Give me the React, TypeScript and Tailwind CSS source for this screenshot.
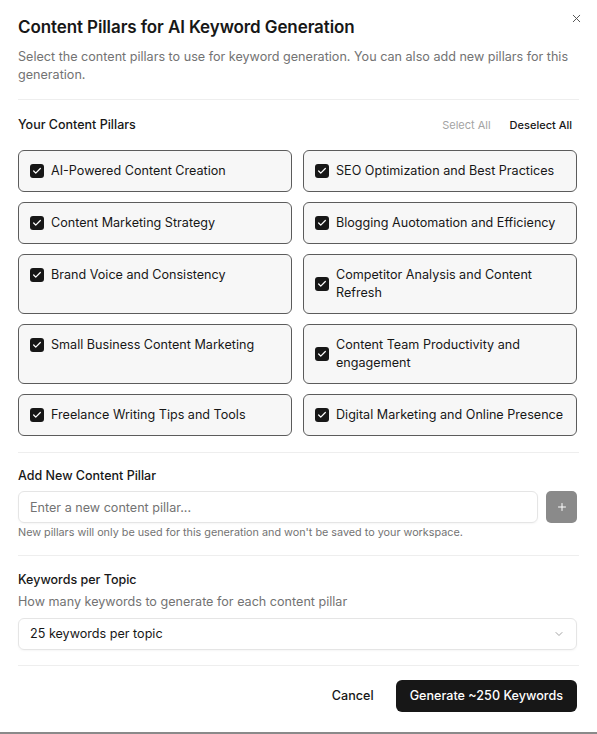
import React, { useState } from "react";

const PILLARS = [
  "AI-Powered Content Creation",
  "SEO Optimization and Best Practices",
  "Content Marketing Strategy",
  "Blogging Auotomation and Efficiency",
  "Brand Voice and Consistency",
  "Competitor Analysis and Content Refresh",
  "Small Business Content Marketing",
  "Content Team Productivity and engagement",
  "Freelance Writing Tips and Tools",
  "Digital Marketing and Online Presence",
];

function CheckBox({ checked }: { checked: boolean }) {
  return (
    <span
      className={
        "flex h-[14px] w-[14px] shrink-0 items-center justify-center rounded-[3px] " +
        (checked ? "bg-[#171717]" : "border border-[#a3a3a3] bg-white")
      }
    >
      {checked && (
        <svg width="10" height="10" viewBox="0 0 24 24" fill="none" stroke="white" strokeWidth="3" strokeLinecap="round" strokeLinejoin="round">
          <path d="M20 6 9 17l-5-5" />
        </svg>
      )}
    </span>
  );
}

export default function App() {
  const [selected, setSelected] = useState<boolean[]>(PILLARS.map(() => true));
  const [pillar, setPillar] = useState("");

  const toggle = (i: number) =>
    setSelected((s) => s.map((v, j) => (j === i ? !v : v)));

  return (
    <div className="min-h-[734px] bg-[#8a8a8a] font-['Inter',sans-serif] text-[#171717]">
      <div className="relative h-[732px] bg-white px-[18px] pt-[16px]">
        <button className="absolute right-[14px] top-[12px] text-[#525252]">
          <svg width="13" height="13" viewBox="0 0 24 24" fill="none" stroke="currentColor" strokeWidth="1.8" strokeLinecap="round">
            <path d="M18 6 6 18M6 6l12 12" />
          </svg>
        </button>

        <h1 className="text-[17px] font-semibold leading-[22px] tracking-[-0.1px]">
          Content Pillars for AI Keyword Generation
        </h1>
        <p className="mt-[10px] text-[12.6px] leading-[18px] text-[#737373]">
          Select the content pillars to use for keyword generation. You can also add new pillars for this generation.
        </p>

        <div className="mt-[15px] border-t border-[#eeeeee]" />

        <div className="mt-[16px] flex items-center justify-between pr-[7px]">
          <h2 className="text-[12.5px] font-medium leading-[18px]">Your Content Pillars</h2>
          <div className="flex items-center gap-[19px] text-[11px] leading-[16px]">
            <button className="text-[#a3a3a3]" onClick={() => setSelected(PILLARS.map(() => true))}>
              Select All
            </button>
            <button className="font-medium text-[#171717]" onClick={() => setSelected(PILLARS.map(() => false))}>
              Deselect All
            </button>
          </div>
        </div>

        <div className="mt-[16px] grid grid-cols-2 gap-x-[11px] gap-y-[10px] pr-[2px]">
          {PILLARS.map((p, i) => (
            <label
              key={p}
              onClick={() => toggle(i)}
              className="cursor-pointer rounded-[6px] border-[1.5px] border-[#5c5c5c] bg-[#f7f7f7] px-[11px] py-[11px]"
            >
              <div className="flex items-center gap-[7px]">
                <CheckBox checked={selected[i]} />
                <span className="text-[12.6px] leading-[18px]">{p}</span>
              </div>
            </label>
          ))}
        </div>

        <div className="mt-[16px] border-t border-[#eeeeee]" />

        <h3 className="mt-[14px] text-[12.5px] font-medium leading-[18px]">Add New Content Pillar</h3>
        <div className="mt-[6px] flex gap-[8px] pr-[2px]">
          <input
            value={pillar}
            onChange={(e) => setPillar(e.target.value)}
            placeholder="Enter a new content pillar..."
            className="h-[32px] flex-1 rounded-[6px] border border-[#e5e5e5] px-[11px] text-[12.6px] shadow-[0_1px_2px_rgba(0,0,0,0.04)] outline-none placeholder:text-[#737373]"
          />
          <button className="flex h-[32px] w-[31px] items-center justify-center rounded-[5px] bg-[#8a8a8a] text-white">
            <svg width="12" height="12" viewBox="0 0 24 24" fill="none" stroke="currentColor" strokeWidth="2" strokeLinecap="round">
              <path d="M12 5v14M5 12h14" />
            </svg>
          </button>
        </div>
        <p className="mt-[3px] text-[10.8px] leading-[14px] text-[#737373]">
          New pillars will only be used for this generation and won't be saved to your workspace.
        </p>

        <div className="mt-[15px] border-t border-[#eeeeee]" />

        <h3 className="mt-[15px] text-[12.5px] font-medium leading-[18px]">Keywords per Topic</h3>
        <p className="mt-[4px] text-[12.6px] leading-[18px] text-[#737373]">
          How many keywords to generate for each content pillar
        </p>
        <div className="mt-[7px] mr-[2px] flex h-[32px] items-center justify-between rounded-[6px] border border-[#e5e5e5] px-[11px] shadow-[0_1px_2px_rgba(0,0,0,0.04)]">
          <span className="text-[12.6px]">25 keywords per topic</span>
          <svg width="12" height="12" viewBox="0 0 24 24" fill="none" stroke="#a3a3a3" strokeWidth="2" strokeLinecap="round" strokeLinejoin="round">
            <path d="m6 9 6 6 6-6" />
          </svg>
        </div>

        <div className="mt-[15px] border-t border-[#eeeeee]" />

        <div className="mt-[14px] flex items-center justify-end gap-[12px] pr-[2px]">
          <button className="h-[32px] px-[10px] text-[12.6px] font-medium">Cancel</button>
          <button className="h-[32px] rounded-[6px] bg-[#171717] px-[14px] text-[12.6px] font-medium text-white">
            Generate ~250 Keywords
          </button>
        </div>
      </div>
    </div>
  );
}
